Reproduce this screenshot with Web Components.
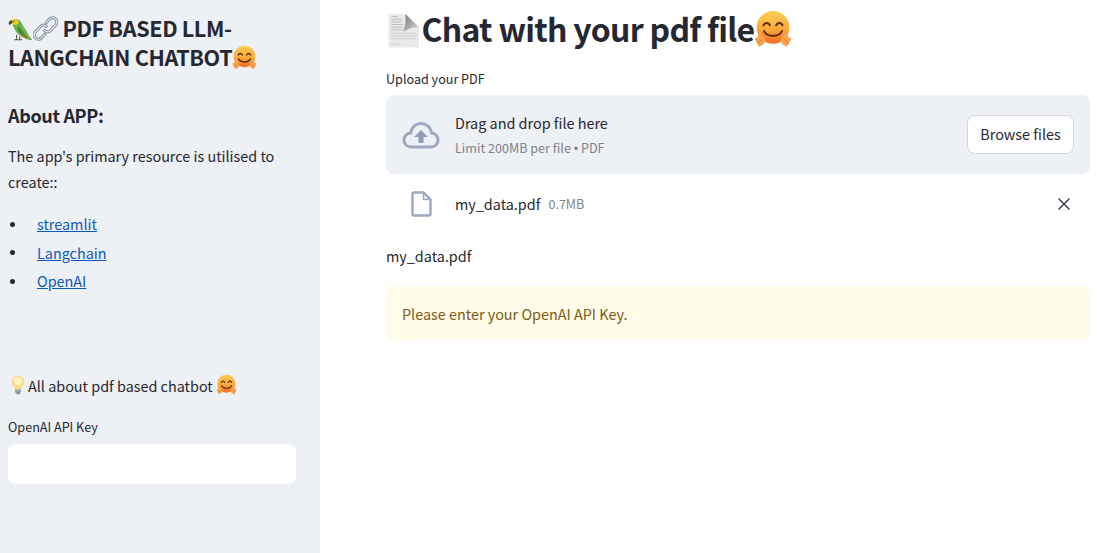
<!DOCTYPE html>
<html><head><meta charset="utf-8">
<style>
html,body{margin:0;padding:0;height:100%;overflow:hidden;background:#fff}
body{font-family:"Noto Sans CJK SC","Source Sans Pro",sans-serif;color:#262730}
</style></head>
<body>
<st-app>
  <st-sidebar slot="side">
    <st-heading><emoji-icon name="parrot" size="25"></emoji-icon><emoji-icon name="link" size="25"></emoji-icon> PDF BASED LLM-LANGCHAIN CHATBOT<emoji-icon name="hug" size="25"></emoji-icon></st-heading>
    <st-subhead>About APP:</st-subhead>
    <st-para>The app's primary resource is utilised to create::</st-para>
    <st-links>
      <st-link-item><a href="#">streamlit</a></st-link-item>
      <st-link-item><a href="#">Langchain</a></st-link-item>
      <st-link-item><a href="#">OpenAI</a></st-link-item>
    </st-links>
    <st-tagline><emoji-icon name="bulb" size="20"></emoji-icon>All about pdf based chatbot <emoji-icon name="hug" size="21"></emoji-icon></st-tagline>
    <st-field label="OpenAI API Key"></st-field>
  </st-sidebar>
  <st-main slot="main">
    <st-title><emoji-icon name="page" size="35.500"></emoji-icon>Chat with your pdf file<emoji-icon name="hug" size="38"></emoji-icon></st-title>
    <st-uploader label="Upload your PDF" file="my_data.pdf" filesize="0.7MB"></st-uploader>
    <st-text>my_data.pdf</st-text>
    <st-alert>Please enter your OpenAI API Key.</st-alert>
  </st-main>
</st-app>
<script>
let uid=0;
const def=(name,css,html)=>{
  customElements.define(name,class extends HTMLElement{
    connectedCallback(){
      if(this.shadowRoot)return;
      const r=this.attachShadow({mode:'open'});
      const h=typeof html==='function'?html(this):html;
      r.innerHTML=`<style>${css}</style>${h}`;
    }
  });
};
const EMOJI={
parrot:()=>`<svg viewBox="0 0 32 32" width="100%" height="100%"><path d="M31 31 24 26 20 22l-2 4 5 3z" fill="#a8532a"/><path d="M5 8c1-3 4-5 7-4 3 1 5 3 6 7 3 4 6 9 8 13 1 2 3 4 5 7-6-1-13-3-17-7C9 20 7 15 6 11z" fill="#6bb043"/><path d="M13 13c3 3 7 8 10 14-5-2-9-5-11-9z" fill="#3f8a35"/><path d="M19 22c2 2 4 4 6 6-2 0-5-1-6-3z" fill="#c9562a"/><path d="M3 7c2-4 8-5 10-1 1 2 1 4-1 5-3 1-5 0-8-1z" fill="#e8cc33"/><path d="M4 5.500C2 6 .5 8 1 10c.3 1 1 2 1.500 2.500 0-2 1-3 2.500-3 1-1 1-3.500-1-4z" fill="#4a4338"/><circle cx="7.500" cy="6.800" r="1.200" fill="#c84c1e"/><path d="M11 24v6m4-4v4M8 30.500h10" stroke="#5e5245" stroke-width="1.300" fill="none"/></svg>`,
link:()=>`<svg viewBox="0 0 32 32" width="100%" height="100%"><g fill="none" stroke-linecap="round"><path d="M17 8.500l4-4.500c2.500-2.500 6-2.500 8 0s2 5.500 0 7.500l-6.500 7c-2.500 2.500-5.500 2.500-7.500 0" stroke="#74889b" stroke-width="3.800"/><path d="M15 23.500l-4 4.500c-2.500 2.500-6 2.500-8 0s-2-5.500 0-7.500l6.500-7c2.500-2.500 5.500-2.500 7.500 0" stroke="#74889b" stroke-width="3.800"/><path d="M17 8.500l4-4.500c2.500-2.500 6-2.500 8 0s2 5.500 0 7.500l-6.500 7c-2.500 2.500-5.500 2.500-7.500 0" stroke="#dbe7ef" stroke-width="1.800"/><path d="M15 23.500l-4 4.500c-2.500 2.500-6 2.500-8 0s-2-5.500 0-7.500l6.500-7c2.500-2.500 5.500-2.500 7.500 0" stroke="#dbe7ef" stroke-width="1.800"/></g></svg>`,
hug:()=>{const i='g'+(++uid);return `<svg viewBox="0 0 36 36" width="100%" height="100%"><defs><linearGradient id="${i}" x1="0" y1="0" x2="0" y2="1"><stop offset="0" stop-color="#fdcf52"/><stop offset=".55" stop-color="#fca93e"/><stop offset="1" stop-color="#f26d26"/></linearGradient></defs><circle cx="18" cy="16.500" r="15.500" fill="url(#${i})"/><path d="M9 14.500c1.200-3 4.800-3 6 0M21 14.500c1.200-3 4.800-3 6 0" fill="none" stroke="#5a2d0e" stroke-width="1.900" stroke-linecap="round"/><path d="M9.500 20c3 6 14 6 17 0" fill="none" stroke="#5a2d0e" stroke-width="1.900" stroke-linecap="round"/><path d="M.5 27l3-1.500L5 21l3 3 3 5-2 3.500-4 2.500-2.500-4zM35.500 27l-3-1.500L31 21l-3 3-3 5 2 3.500 4 2.500 2.500-4z" fill="#f8a24b"/><path d="M4 31l3-3M32 31l-3-3" stroke="#d9691f" stroke-width=".9"/></svg>`},
bulb:()=>`<svg viewBox="0 0 20 24" width="100%" height="100%"><path d="M10 1c4.500 0 7.500 3 7.500 7 0 3-2 4.500-3 7l-.5 2H6l-.5-2c-1-2.500-3-4-3-7 0-4 3-7 7.500-7z" fill="#f9dd83"/><path d="M10 2.500c3 0 5 2 5 4.500 0 2-2 3-3 5H8C7 10 5 9 5 7c0-2.500 2-4.500 5-4.500z" fill="#fff3bf"/><path d="M6.500 17.500h7v3l-2 2.500h-3l-2-2.500z" fill="#8c8f96"/><path d="M6.500 19h7" stroke="#c5c8cd" stroke-width=".8"/></svg>`,
page:()=>{const i='p'+(++uid);return `<svg viewBox="0 0 36 40" width="100%" height="100%"><defs><linearGradient id="${i}c" x1="0" y1="0" x2="1" y2="1"><stop offset="0" stop-color="#77777a"/><stop offset=".45" stop-color="#a3a3a6"/><stop offset="1" stop-color="#dcdcde"/></linearGradient></defs><path d="M1 1h19l15 15v23H1z" fill="#e9e9ea"/><g stroke="#bcbcbf" stroke-width="1.100"><path d="M4 4h7M4 7h12M4 10h12M4 13h13M4 16h13M4 19h14"/><path d="M4 23h28M4 26h28M4 29h28M4 35h10" stroke="#cbcbce"/></g><path d="M20 1c0 6 .5 11-1.500 16-.3 1.500-.5 3-.5 4 5-3.500 10-5 17-5z" fill="url(#${i}c)"/></svg>`}
};
def('emoji-icon',':host{display:inline-block;vertical-align:-.2em;line-height:0}',h=>{const s=h.getAttribute('size');h.style.width=s+'px';h.style.height=s+'px';return EMOJI[h.getAttribute('name')]()});
def('st-app',':host{display:flex;height:553px;width:1097px}::slotted([slot=side]){flex:0 0 320px}::slotted([slot=main]){flex:1}','<slot name="side"></slot><slot name="main"></slot>');
def('st-sidebar',':host{display:flex;flex-direction:column;box-sizing:border-box;width:320px;height:553px;padding:13px 24px 0 8px;background:#edf0f5}','<slot></slot>');
def('st-main',':host{display:flex;flex-direction:column;box-sizing:border-box;padding:6px 7px 0 66px;min-width:0}','<slot></slot>');
def('st-heading',':host{display:block;font-size:21.6px;line-height:29px;font-weight:700;letter-spacing:-.38px}','<slot></slot>');
def('st-subhead',':host{display:block;font-size:18px;line-height:26px;font-weight:700;letter-spacing:-.35px;margin-top:31px}','<slot></slot>');
def('st-para',':host{display:block;font-size:14.4px;line-height:26px;margin-top:15px}','<slot></slot>');
def('st-links',':host{display:flex;flex-direction:column;gap:2.500px;margin-top:16px;font-size:14.4px;line-height:26px}','<slot></slot>');
def('st-link-item',':host{display:flex;align-items:center;gap:22.5px;padding-left:1.500px}.d{width:5px;height:5px;border-radius:50%;background:#262730;flex:none}::slotted(a){color:#0b5ab8}','<span class="d"></span><span><slot></slot></span>');
def('st-tagline',':host{display:block;font-size:14.4px;line-height:26px;margin-top:79px}','<slot></slot>');
def('st-field',':host{display:block;margin-top:19px}.l{font-size:12.6px;line-height:18px;margin-bottom:8px}.i{height:40px;border-radius:8px;background:#fff}',h=>`<div class="l">${h.getAttribute('label')}</div><div class="i"></div>`);
def('st-title',':host{display:block;font-size:32px;line-height:44px;font-weight:700;letter-spacing:-.72px;white-space:nowrap}','<slot></slot>');
def('st-uploader',`:host{display:block;margin-top:20px}
.l{font-size:12.6px;line-height:18px;margin-bottom:7px}
.box{display:flex;align-items:center;height:79px;box-sizing:border-box;background:#edf0f5;border-radius:8px;padding:0 16px}
.cloud{width:38px;height:38px;margin-right:15px;flex:none}
.t{flex:1;padding-top:2px}.a{font-size:14.4px;line-height:20px}.b{font-size:12.6px;line-height:18px;color:#808389;margin-top:6px}
.dot{font-family:"Liberation Sans",sans-serif}
button{font:inherit;font-size:14.4px;height:39px;width:107px;background:#fff;border:1px solid #d4d6dc;border-radius:8px;color:#262730;padding:0 0 2px}
.file{display:flex;align-items:center;height:60px;padding:0 16px}
.doc{width:38px;height:26px;margin-right:15px;flex:none;display:flex;justify-content:center}
.n{font-size:14.4px;margin-bottom:2px}.s{font-size:12.6px;color:#808389;margin:0 0 2px 8px}
.x{margin-left:auto;width:16px;height:16px;margin-right:2px}`,h=>`<div class="l">${h.getAttribute('label')}</div>
<div class="box"><svg class="cloud" viewBox="0 0 38 38" fill="none"><path d="M9.500 31C5 31 2 28 2 24c0-3.800 2.800-6.600 6.500-7C10 11 14 7.500 19 7.500c5.500 0 9.700 4 10.700 9.500 3.600.5 6.300 3.300 6.300 7 0 4-3 7-7.500 7z" stroke="#9ba8c0" stroke-width="3"/><path d="M19 14l7 7h-4.500v6h-5v-6H12z" fill="#8f9db7"/></svg>
<div class="t"><div class="a">Drag and drop file here</div><div class="b">Limit 200MB per file <span class="dot">•</span> PDF</div></div><button>Browse files</button></div>
<div class="file"><span class="doc"><svg width="21" height="26" viewBox="0 0 21 26" fill="none"><path d="M3 1.500h9.500l7 7V23a1.500 1.500 0 0 1-1.500 1.500H3A1.500 1.500 0 0 1 1.500 23V3A1.500 1.500 0 0 1 3 1.500z" stroke="#9ba8c0" stroke-width="2.400"/><path d="M12.500 2v6.500H19" stroke="#9ba8c0" stroke-width="1.600"/></svg></span>
<span class="n">${h.getAttribute('file')}</span><span class="s">${h.getAttribute('filesize')}</span>
<svg class="x" viewBox="0 0 16 16"><path d="M3 3l10 10M13 3L3 13" stroke="#31333f" stroke-width="1.400" stroke-linecap="round"/></svg></div>`);
def('st-text',':host{display:block;font-size:14.4px;line-height:26px;margin-top:9px}','<slot></slot>');
def('st-alert',':host{display:block;margin-top:17px;box-sizing:border-box;height:55px;padding:0 16px;border-radius:8px;background:#fffce9;color:#7e5a14;font-size:14.4px;line-height:55px}','<slot></slot>');
</script>
</body></html>
